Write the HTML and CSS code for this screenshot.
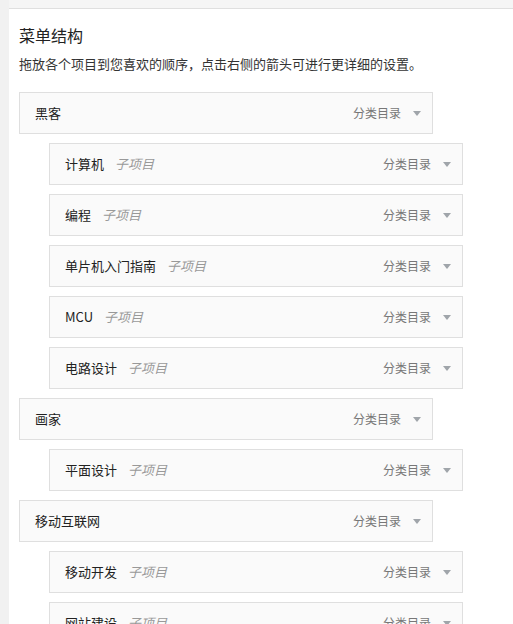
FILE: index.html
```html
<!DOCTYPE html>
<html lang="zh-CN">
<head>
    <meta charset="UTF-8">
    <meta name="viewport" content="width=device-width, initial-scale=1.0">
    <title>菜单结构</title>
    <link rel="stylesheet" href="styles.css">
</head>
<body>
    <div class="panel">
        <div class="panel-top"></div>
        <div class="menu-edit">
            <h3 class="menu-title">菜单结构</h3>
            <p class="menu-desc">拖放各个项目到您喜欢的顺序，点击右侧的箭头可进行更详细的设置。</p>

            <ul class="menu">
                <li class="menu-item depth-0">
                    <span class="item-title">黑客</span>
                    <span class="item-controls"><span class="item-type">分类目录</span><svg class="item-edit" width="8" height="5" viewBox="0 0 8 5"><polygon points="0,0 8,0 4,5"/></svg></span>
                </li>
                <li class="menu-item depth-1">
                    <span class="item-title">计算机<span class="is-submenu">子项目</span></span>
                    <span class="item-controls"><span class="item-type">分类目录</span><svg class="item-edit" width="8" height="5" viewBox="0 0 8 5"><polygon points="0,0 8,0 4,5"/></svg></span>
                </li>
                <li class="menu-item depth-1">
                    <span class="item-title">编程<span class="is-submenu">子项目</span></span>
                    <span class="item-controls"><span class="item-type">分类目录</span><svg class="item-edit" width="8" height="5" viewBox="0 0 8 5"><polygon points="0,0 8,0 4,5"/></svg></span>
                </li>
                <li class="menu-item depth-1">
                    <span class="item-title">单片机入门指南<span class="is-submenu">子项目</span></span>
                    <span class="item-controls"><span class="item-type">分类目录</span><svg class="item-edit" width="8" height="5" viewBox="0 0 8 5"><polygon points="0,0 8,0 4,5"/></svg></span>
                </li>
                <li class="menu-item depth-1">
                    <span class="item-title">MCU<span class="is-submenu">子项目</span></span>
                    <span class="item-controls"><span class="item-type">分类目录</span><svg class="item-edit" width="8" height="5" viewBox="0 0 8 5"><polygon points="0,0 8,0 4,5"/></svg></span>
                </li>
                <li class="menu-item depth-1">
                    <span class="item-title">电路设计<span class="is-submenu">子项目</span></span>
                    <span class="item-controls"><span class="item-type">分类目录</span><svg class="item-edit" width="8" height="5" viewBox="0 0 8 5"><polygon points="0,0 8,0 4,5"/></svg></span>
                </li>
                <li class="menu-item depth-0">
                    <span class="item-title">画家</span>
                    <span class="item-controls"><span class="item-type">分类目录</span><svg class="item-edit" width="8" height="5" viewBox="0 0 8 5"><polygon points="0,0 8,0 4,5"/></svg></span>
                </li>
                <li class="menu-item depth-1">
                    <span class="item-title">平面设计<span class="is-submenu">子项目</span></span>
                    <span class="item-controls"><span class="item-type">分类目录</span><svg class="item-edit" width="8" height="5" viewBox="0 0 8 5"><polygon points="0,0 8,0 4,5"/></svg></span>
                </li>
                <li class="menu-item depth-0">
                    <span class="item-title">移动互联网</span>
                    <span class="item-controls"><span class="item-type">分类目录</span><svg class="item-edit" width="8" height="5" viewBox="0 0 8 5"><polygon points="0,0 8,0 4,5"/></svg></span>
                </li>
                <li class="menu-item depth-1">
                    <span class="item-title">移动开发<span class="is-submenu">子项目</span></span>
                    <span class="item-controls"><span class="item-type">分类目录</span><svg class="item-edit" width="8" height="5" viewBox="0 0 8 5"><polygon points="0,0 8,0 4,5"/></svg></span>
                </li>
                <li class="menu-item depth-1">
                    <span class="item-title">网站建设<span class="is-submenu">子项目</span></span>
                    <span class="item-controls"><span class="item-type">分类目录</span><svg class="item-edit" width="8" height="5" viewBox="0 0 8 5"><polygon points="0,0 8,0 4,5"/></svg></span>
                </li>
            </ul>
        </div>
    </div>
</body>
</html>
```

FILE: styles.css
```css
body {
    margin: 0;
    background-color: #f1f1f1;
    font-family: "Noto Sans CJK SC", "Liberation Sans", sans-serif;
    color: #222;
}
.panel {
    margin-left: 9px;
    background: #fff;
    min-height: 624px;
}
.panel-top {
    height: 8px;
    background: #f5f5f5;
    border-bottom: 1px solid #dfdfdf;
}
.menu-edit {
    padding: 0 10px;
}
.menu-title {
    margin: 16px 0 0;
    font-size: 16px;
    font-weight: normal;
    line-height: 20px;
    color: #222;
}
.menu-desc {
    margin: 9px 0 0;
    font-size: 13px;
    line-height: 20px;
    color: #333;
}
.menu {
    list-style: none;
    margin: 18px 0 0;
    padding: 0;
}
.menu-item {
    display: flex;
    justify-content: space-between;
    align-items: center;
    width: 386px;
    margin-top: 9px;
    padding: 10px 11px 10px 15px;
    background: #fafafa;
    border: 1px solid #dfdfdf;
    font-size: 13px;
    line-height: 20px;
}
.depth-1 {
    margin-left: 30px;
}
.item-title {
    color: #222;
}
.is-submenu {
    margin-left: 11px;
    color: #999;
    font-style: italic;
}
.item-controls {
    display: flex;
    align-items: center;
}
.item-type {
    font-size: 12px;
    color: #777;
}
.item-edit {
    margin-left: 12px;
    fill: #a0a5aa;
}
```
